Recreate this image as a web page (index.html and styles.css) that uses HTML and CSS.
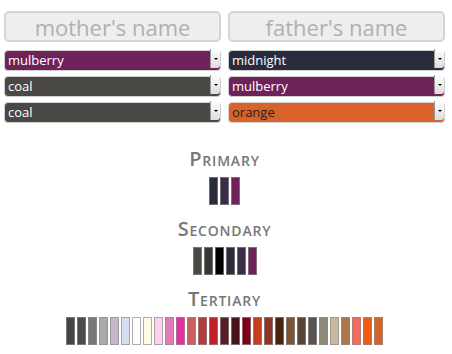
FILE: index.html
```html
<!DOCTYPE html>
<html lang="en">
<head>
    <meta charset="UTF-8">
    <title>Dragon Breeder</title>
    <link rel="stylesheet" href="styles.css">
</head>
<body>
    <!-- Parents -->
    <div class="parents">
        <div class="parent">
            <input class="name" type="text" placeholder="mother's name">
            <div class="pick"><select class="c-mulberry"><option>mulberry</option></select><span class="arrow"></span></div>
            <div class="pick"><select class="c-coal"><option>coal</option></select><span class="arrow"></span></div>
            <div class="pick"><select class="c-coal"><option>coal</option></select><span class="arrow"></span></div>
        </div>
        <div class="parent">
            <input class="name" type="text" placeholder="father's name">
            <div class="pick"><select class="c-midnight"><option>midnight</option></select><span class="arrow"></span></div>
            <div class="pick"><select class="c-mulberry"><option>mulberry</option></select><span class="arrow"></span></div>
            <div class="pick"><select class="c-orange"><option>orange</option></select><span class="arrow"></span></div>
        </div>
    </div>

    <!-- Offspring colours -->
    <div class="results">
        <h3>Primary</h3>
        <div class="swatches">
            <span class="sw" style="background:#2a2c3b"></span>
            <span class="sw" style="background:#3b2d47"></span>
            <span class="sw" style="background:#6d2259"></span>
        </div>

        <h3>Secondary</h3>
        <div class="swatches">
            <span class="sw" style="background:#4a4845"></span>
            <span class="sw" style="background:#373735"></span>
            <span class="sw" style="background:#000000"></span>
            <span class="sw" style="background:#2a2c3b"></span>
            <span class="sw" style="background:#3b2d47"></span>
            <span class="sw" style="background:#6d2259"></span>
        </div>

        <h3>Tertiary</h3>
        <div class="swatches">
            <span class="sw" style="background:#464644"></span>
            <span class="sw" style="background:#4b4b4b"></span>
            <span class="sw" style="background:#777777"></span>
            <span class="sw" style="background:#aaaaaa"></span>
            <span class="sw" style="background:#c4b8c8"></span>
            <span class="sw" style="background:#d8def2"></span>
            <span class="sw" style="background:#ffffff"></span>
            <span class="sw" style="background:#fffbe2"></span>
            <span class="sw" style="background:#fcd0ee"></span>
            <span class="sw" style="background:#e27ab8"></span>
            <span class="sw" style="background:#e82ea0"></span>
            <span class="sw" style="background:#c86060"></span>
            <span class="sw" style="background:#b33c3c"></span>
            <span class="sw" style="background:#c2202a"></span>
            <span class="sw" style="background:#5c1c26"></span>
            <span class="sw" style="background:#4a1418"></span>
            <span class="sw" style="background:#800018"></span>
            <span class="sw" style="background:#c83c1e"></span>
            <span class="sw" style="background:#8e3424"></span>
            <span class="sw" style="background:#4a2410"></span>
            <span class="sw" style="background:#7a5434"></span>
            <span class="sw" style="background:#5a4230"></span>
            <span class="sw" style="background:#5a5250"></span>
            <span class="sw" style="background:#8e8a7a"></span>
            <span class="sw" style="background:#c9b89a"></span>
            <span class="sw" style="background:#b07848"></span>
            <span class="sw" style="background:#f8695a"></span>
            <span class="sw" style="background:#f05a14"></span>
            <span class="sw" style="background:#d6642a"></span>
        </div>
    </div>
</body>
</html>
```

FILE: styles.css
```css
body {
    font-family: "Open Sans", sans-serif;
    margin: 0;
    background: #fff;
}
/* Parent pickers */
.parents {
    display: grid;
    grid-template-columns: 217px 217px;
    gap: 7px;
    padding: 11px 0 0 4px;
}
.parent {
    display: flex;
    flex-direction: column;
    gap: 5px;
}
.name {
    height: 31px;
    margin-bottom: 1px;
    box-sizing: border-box;
    border: 2px solid #d4d4d4;
    border-radius: 5px;
    background: #eeeeee;
    font-family: "Open Sans", sans-serif;
    font-size: 22px;
    text-align: center;
    padding: 0;
}
.name::placeholder {
    color: #b0b0b0;
}
.pick {
    position: relative;
    height: 21px;
}
.pick select {
    appearance: none;
    width: 100%;
    height: 21px;
    box-sizing: border-box;
    border: 1px solid #d0d0d0;
    border-radius: 4px;
    padding: 0 0 0 3px;
    font-family: "Open Sans", sans-serif;
    font-size: 13px;
    color: #fff;
}
.pick .arrow {
    position: absolute;
    top: 1px;
    right: 1px;
    bottom: 1px;
    width: 9px;
    background: linear-gradient(#ffffff, #dcdcdc);
    border-left: 1px solid #9a9a9a;
    border-radius: 0 3px 3px 0;
}
.pick .arrow::after {
    content: "";
    position: absolute;
    left: 3px;
    top: 9px;
    border-left: 2px solid transparent;
    border-right: 2px solid transparent;
    border-top: 2px solid #000;
}
.c-mulberry { background: #6e2259; }
.c-coal { background: #4a4845; }
.c-midnight { background: #2a2c3b; }
.c-orange { background: #d9622b; color: #222 !important; }

/* Results */
.results {
    display: flex;
    flex-direction: column;
    align-items: center;
    padding-top: 28px;
    padding-right: 3px;
}
.results h3 {
    margin: 0;
    font-size: 20px;
    font-weight: 600;
    font-variant: small-caps;
    letter-spacing: 0.8px;
    color: #777777;
    line-height: 20px;
}
.swatches {
    display: flex;
    gap: 2px;
    margin: 8px 0 14px;
}
.sw {
    width: 7px;
    height: 26px;
    border: 1px solid rgba(140, 140, 140, 0.7);
}
```
